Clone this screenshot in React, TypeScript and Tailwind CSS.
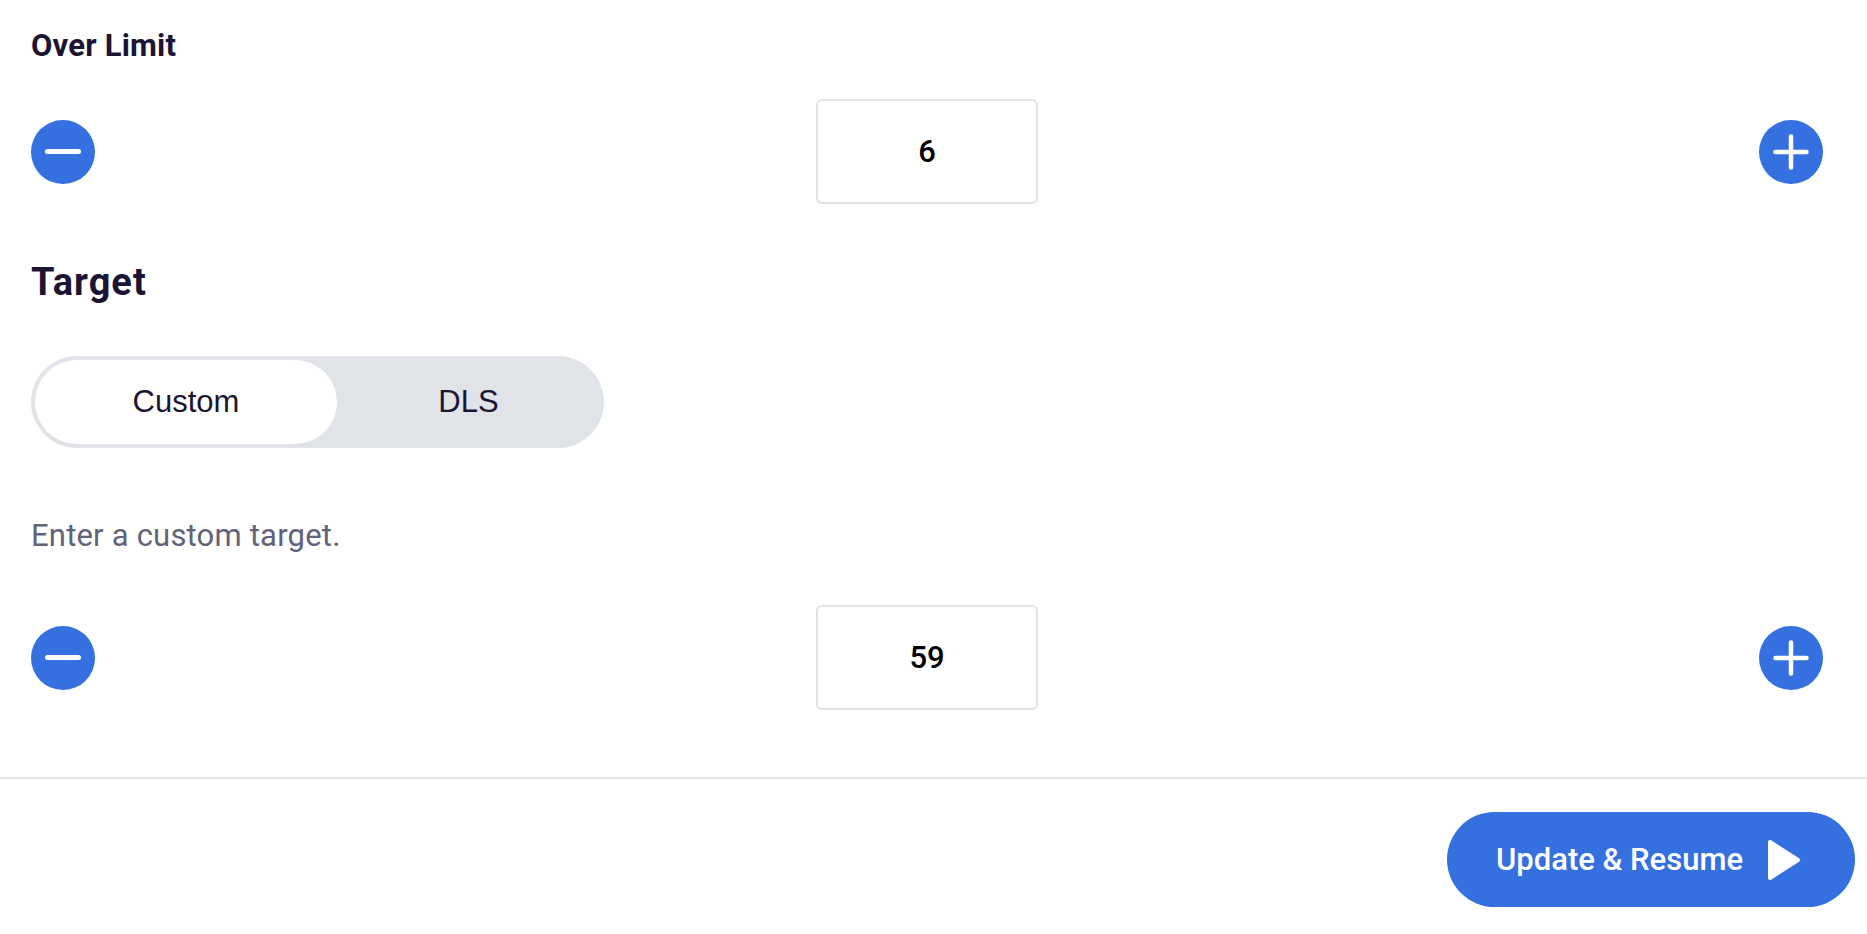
import React from "react";

const BLUE = "#3470e0";

function MinusIcon() {
  return (
    <svg width="64" height="64" viewBox="0 0 64 64" className="block">
      <circle cx="32" cy="32" r="32" fill={BLUE} />
      <line x1="16.5" y1="31.5" x2="47.5" y2="31.5" stroke="#fff" strokeWidth="5" strokeLinecap="round" />
    </svg>
  );
}

function PlusIcon() {
  return (
    <svg width="64" height="64" viewBox="0 0 64 64" className="block">
      <circle cx="32" cy="32" r="32" fill={BLUE} />
      <line x1="16.5" y1="32" x2="47.5" y2="32" stroke="#fff" strokeWidth="4.5" strokeLinecap="round" />
      <line x1="32" y1="16.5" x2="32" y2="47.5" stroke="#fff" strokeWidth="4.5" strokeLinecap="round" />
    </svg>
  );
}

function Stepper({ value }: { value: number }) {
  return (
    <div className="flex items-center justify-between h-[105px]">
      <button className="w-16 h-16 rounded-full">
        <MinusIcon />
      </button>
      <div className="w-[222px] h-[105px] border-2 border-[#dfe2e7] rounded-[6px] flex items-center justify-center text-[31px] font-medium text-black leading-none font-['Roboto',sans-serif]">
        {value}
      </div>
      <button className="w-16 h-16 rounded-full">
        <PlusIcon />
      </button>
    </div>
  );
}

export default function App() {
  return (
    <div className="w-[1867px] h-[934px] bg-white overflow-hidden font-['Roboto',sans-serif]">
      <div className="pl-[31px] pr-[44px] pt-[28px]">
        <h2 className="text-[31px] leading-[36px] font-bold text-[#1b1433] tracking-[0.2px]">Over Limit</h2>
        <div className="mt-[35px]">
          <Stepper value={6} />
        </div>
        <h2 className="mt-[57px] text-[38px] leading-[42px] font-bold text-[#1b1433] tracking-[1px]">Target</h2>
        <div className="mt-[53px] w-[573px] h-[92px] rounded-full bg-[#e0e3e8] p-[4px] flex font-['Liberation_Sans',Arial,sans-serif]">
          <button className="w-[302px] h-full rounded-full bg-white flex items-center justify-center text-[31px] text-[#1b1433]">
            Custom
          </button>
          <button className="flex-1 h-full rounded-full flex items-center justify-center text-[31px] text-[#1b1433]">
            DLS
          </button>
        </div>
        <p className="mt-[70px] text-[31px] leading-[36px] text-[#62627a] tracking-[0.2px]">Enter a custom target.</p>
        <div className="mt-[51px]">
          <Stepper value={59} />
        </div>
      </div>
      <div className="mt-[67px] h-[2px] bg-[#dfe2e6]" />
      <div className="flex justify-end pr-[12px] pt-[33px]">
        <button
          className="h-[95px] w-[408px] rounded-full flex items-center pl-[49px] text-white text-[31px] font-medium"
          style={{ backgroundColor: BLUE }}
        >
          <span className="leading-none">Update &amp; Resume</span>
          <svg width="34" height="42" viewBox="0 0 34 42" className="ml-[24px] block">
            <path d="M3 3 L31 21 L3 39 Z" fill="#fff" stroke="#fff" strokeWidth="4" strokeLinejoin="round" />
          </svg>
        </button>
      </div>
    </div>
  );
}
